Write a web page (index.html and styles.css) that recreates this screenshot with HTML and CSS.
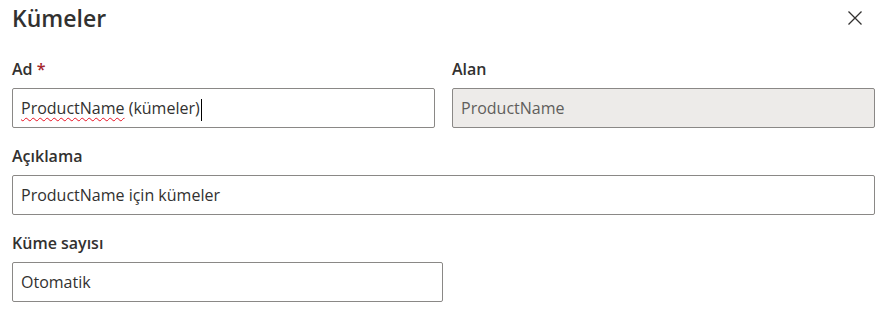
FILE: index.html
```html
<!DOCTYPE html>
<html lang="tr">

<head>
    <meta charset="UTF-8">
    <meta name="viewport" content="width=device-width, initial-scale=1.0">
    <title>Kümeler</title>
    <link rel="stylesheet" href="styles.css">
</head>

<body>
    <div class="panel">
        <div class="header">
            <h1>Kümeler</h1>
            <button class="close" aria-label="Kapat">
                <svg width="16" height="16" viewBox="0 0 16 16">
                    <path d="M1.5 1.5 L14.5 14.5 M14.5 1.5 L1.5 14.5" stroke="#323130" stroke-width="1.3" fill="none" />
                </svg>
            </button>
        </div>

        <div class="row">
            <div class="field">
                <label>Ad <span class="req">*</span></label>
                <div class="box"><span class="typo">ProductName</span> (kümeler)<span class="caret"></span></div>
            </div>
            <div class="field">
                <label>Alan</label>
                <div class="box disabled">ProductName</div>
            </div>
        </div>

        <div class="field">
            <label>Açıklama</label>
            <div class="box">ProductName için kümeler</div>
        </div>

        <div class="field narrow">
            <label>Küme sayısı</label>
            <div class="box">Otomatik</div>
        </div>
    </div>
</body>

</html>
```

FILE: styles.css
```css
body {
    margin: 0;
    background: white;
    font-family: "Open Sans", "Noto Sans", Arial, sans-serif;
    color: #323130;
}

.panel {
    padding: 0 10px 0 12px;
}

.header {
    display: flex;
    justify-content: space-between;
    align-items: center;
    height: 36px;
}

h1 {
    margin: 0;
    font-size: 23px;
    font-weight: 600;
    color: #323130;
}

.close {
    background: none;
    border: none;
    padding: 0;
    margin-right: 12px;
    width: 16px;
    height: 16px;
    cursor: pointer;
}

.row {
    display: flex;
    gap: 17px;
}

.row .field {
    flex: 1;
}

.field {
    margin-top: 22px;
}

.row + .field,
.field + .field.narrow {
    margin-top: 17px;
}

label {
    display: block;
    font-size: 16px;
    font-weight: 600;
    line-height: 22px;
    margin-bottom: 8px;
}

.req {
    color: #a4262c;
}

.box {
    border: 1px solid #8a8886;
    border-radius: 2px;
    box-sizing: border-box;
    height: 40px;
    padding: 0 8px;
    font-size: 16px;
    line-height: 38px;
    white-space: nowrap;
}

.disabled {
    background: #edebe9;
    color: #605e5c;
}

.narrow {
    width: 431px;
}

.typo {
    text-decoration: underline wavy #e81123;
    text-decoration-thickness: 1px;
    text-underline-offset: 3px;
}

.caret {
    display: inline-block;
    width: 1px;
    height: 22px;
    background: #000;
    vertical-align: middle;
    margin-left: 1px;
}
```
